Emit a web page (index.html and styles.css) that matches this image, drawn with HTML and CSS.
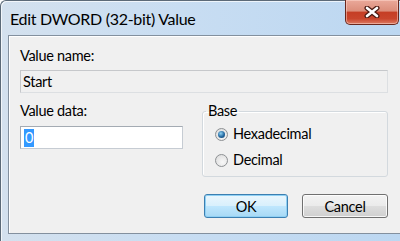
FILE: index.html
```html
<!DOCTYPE html>
<html>
<head>
    <title>Edit DWORD (32-bit) Value</title>
    <link rel="stylesheet" href="styles.css">
</head>
<body>
    <div class="window">
        <div class="titlebar">
            <span class="title">Edit DWORD (32-bit) Value</span>
            <button class="close" type="button">
                <svg width="16" height="12" viewBox="0 0 16 12">
                    <path d="M3 2 L13 10 M13 2 L3 10" stroke="#4b1a12" stroke-width="5" stroke-linecap="round"/>
                    <path d="M3 2 L13 10 M13 2 L3 10" stroke="#ffffff" stroke-width="2.6" stroke-linecap="round"/>
                </svg>
            </button>
        </div>

        <div class="client">
            <div class="lbl">Value name:</div>
            <div class="field readonly">Start</div>

            <div class="middle">
                <div class="data-col">
                    <div class="lbl">Value data:</div>
                    <div class="field edit"><span class="sel">0</span></div>
                </div>

                <fieldset class="base">
                    <legend>Base</legend>
                    <label class="radio"><span class="dot checked"></span>Hexadecimal</label>
                    <label class="radio"><span class="dot"></span>Decimal</label>
                </fieldset>
            </div>

            <div class="buttons">
                <button class="btn default" type="button">OK</button>
                <button class="btn" type="button">Cancel</button>
            </div>
        </div>
    </div>
</body>
</html>
```

FILE: styles.css
```css
body {
    margin: 0;
    font-family: Lato, "Noto Sans", sans-serif;
    color: #000;
}

.window {
    width: 400px;
    height: 241px;
    box-sizing: border-box;
    display: flex;
    flex-direction: column;
    padding: 0 0 7px 7px;
    border-top: 1px solid #5c6a78;
    border-left: 1px solid #5c6a78;
    border-top-left-radius: 6px;
    background: linear-gradient(to right, #d4e1ee, #c8ddf2 45%, #bcd7f1);
    box-shadow: inset 1px 1px 0 rgba(255, 255, 255, 0.7);
}

.titlebar {
    height: 34px;
    display: flex;
    justify-content: space-between;
    align-items: flex-start;
}

.title {
    margin: 8px 0 0 2px;
    font-size: 16px;
    line-height: 20px;
    letter-spacing: -0.3px;
}

.close {
    width: 54px;
    height: 25px;
    margin: -1px 1px 0 0;
    padding: 0;
    display: flex;
    align-items: center;
    justify-content: center;
    border: 1px solid #6a271c;
    border-top: none;
    border-radius: 0 0 5px 5px;
    background: linear-gradient(#eaa99a 0%, #dc8e7b 45%, #c53e25 52%, #c9452c 78%, #dc7a62 100%);
    box-shadow: inset 0 0 0 1px rgba(255, 220, 210, 0.5);
}

.client {
    flex: 1;
    background: #f0f0f0;
    border: 1px solid #83909e;
    border-right: none;
    box-shadow: inset 1px 1px 0 #fff;
    padding: 11px 12px 0 11px;
    font-size: 14.5px;
    line-height: 18px;
    letter-spacing: -0.3px;
}

.lbl {
    height: 18px;
}

.field {
    box-sizing: border-box;
    height: 23px;
    margin-top: 5px;
    padding: 0 0 0 2px;
    border: 1px solid #bfc4c9;
    display: flex;
    align-items: center;
}

.readonly {
    background: #f0f0f0;
    border-color: #c6c8cb #dcdfe2 #dcdfe2 #c6c8cb;
}

.edit {
    margin-top: 6px;
    background: #fff;
    border-color: #a4abb3 #c6ccd3 #c6ccd3 #a4abb3;
    padding-left: 3px;
}

.sel {
    background: #3399ff;
    color: #fff;
    padding: 0 1px;
}

.middle {
    display: flex;
    gap: 19px;
    margin-top: 9px;
}

.data-col {
    width: 163px;
}

.base {
    flex: 1;
    margin: 0;
    padding: 0 0 7px 12px;
    border: 1px solid #d3d9de;
    border-radius: 3px;
    box-shadow: inset 1px 1px 0 #fff;
}

.base legend {
    margin-left: -9px;
    padding: 0 2px;
}

.radio {
    display: flex;
    align-items: center;
    gap: 5px;
    margin-top: 5px;
}

.radio + .radio {
    margin-top: 8px;
}

.dot {
    box-sizing: border-box;
    width: 13px;
    height: 13px;
    border-radius: 50%;
    border: 1px solid #8d9093;
    background: radial-gradient(circle at 60% 65%, #f8f8f8, #d9d9d9);
    display: flex;
    align-items: center;
    justify-content: center;
}

.dot.checked::after {
    content: "";
    width: 7px;
    height: 7px;
    border-radius: 50%;
    background: radial-gradient(circle at 40% 35%, #8fd2f4, #23689f 55%, #123d66);
}

.buttons {
    display: flex;
    justify-content: flex-end;
    gap: 14px;
    margin-top: 17px;
}

.btn {
    box-sizing: border-box;
    width: 86px;
    height: 24px;
    padding: 0;
    font-family: inherit;
    font-size: 14.5px;
    letter-spacing: -0.3px;
    color: #000;
    border: 1px solid #707070;
    border-radius: 3px;
    background: linear-gradient(#f3f3f3 0%, #ebebeb 48%, #dddddd 52%, #cfcfcf 100%);
    box-shadow: inset 0 0 0 1px rgba(255, 255, 255, 0.8);
}

.btn.default {
    width: 84px;
    border-color: #3c7fb1;
    background: linear-gradient(#eaf6fd 0%, #d9f0fc 48%, #bee6fd 52%, #a7d9f5 100%);
    box-shadow: inset 0 0 0 1px #8fd0f4;
}
```
